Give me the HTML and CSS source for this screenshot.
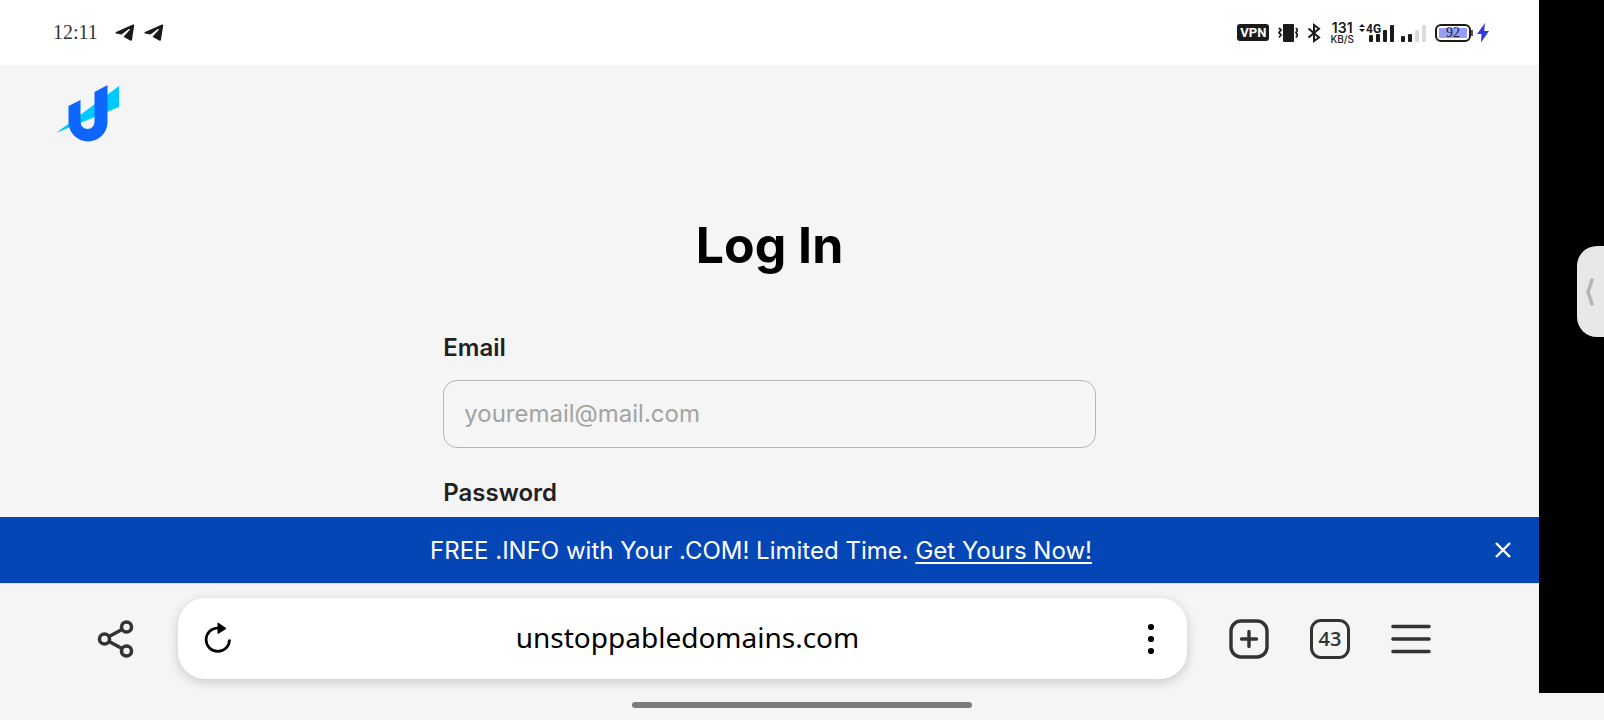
FILE: index.html
```html
<!DOCTYPE html>
<html lang="en">
<head>
  <meta charset="UTF-8">
  <meta name="viewport" content="width=device-width, initial-scale=1.0">
  <title>Log In</title>
  <link rel="stylesheet" href="styles.css">
</head>
<body>
  <div class="device">
    <div class="screen">
      <!-- Status bar -->
      <header class="status-bar">
        <div class="status-left">
          <span class="clock">12:11</span>
          <svg width="20" height="18" viewBox="0 0 20 18" fill="#1a1a1a"><path d="M1 8 18 .5q1.500-.4 1.200 1L17 15.800q-.4 1.600-1.800.8L8.500 12.800l6.300-7c.6-.8-.2-1.200-.9-.7L6.500 10.500 1 9.400Q-.3 8.800 1 8z"/></svg>
          <svg width="20" height="18" viewBox="0 0 20 18" fill="#1a1a1a"><path d="M1 8 18 .5q1.500-.4 1.200 1L17 15.800q-.4 1.600-1.800.8L8.500 12.800l6.300-7c.6-.8-.2-1.200-.9-.7L6.500 10.500 1 9.400Q-.3 8.800 1 8z"/></svg>
        </div>
        <div class="status-right">
          <span class="vpn">VPN</span>
          <svg width="20" height="20" viewBox="0 0 20 20">
            <rect x="5" y="1" width="11" height="18" rx="1" fill="#1a1a1a"/>
            <path d="M1 5l2 2-2 2.500L3 12l-2 2.500M18 5l1.500 2L18 9.500l1.500 2.500L18 14.500" fill="none" stroke="#1a1a1a" stroke-width="1.800"/>
          </svg>
          <svg width="14" height="20" viewBox="0 0 14 20" fill="none" stroke="#1a1a1a" stroke-width="2"><path d="m1.500 5.500 10.500 9L7 18V2l5 3.800-10.500 8.700"/></svg>
          <span class="speed"><b>131</b><small>KB/S</small></span>
          <svg class="signal" width="36" height="20" viewBox="0 0 36 20" fill="#1a1a1a">
            <path d="m0 4 3-3 3 3zM0 6h6L3 9z"/>
            <text x="7" y="10">4G</text>
            <rect x="10" y="12" width="4" height="7" rx="1"/><rect x="17" y="11" width="4" height="8" rx="1"/><rect x="24" y="7" width="4" height="12" rx="1"/><rect x="31" y="2" width="4" height="17" rx="1"/>
          </svg>
          <svg width="25" height="20" viewBox="0 0 25 20" fill="#1a1a1a">
            <rect x="0" y="13" width="4" height="6" rx="1"/><rect x="7" y="11" width="4" height="8" rx="1"/>
            <g fill="#dcdcdc"><rect x="14" y="7" width="4" height="12" rx="1"/><rect x="21" y="2" width="4" height="17" rx="1"/></g>
          </svg>
          <span class="power">
            <span class="battery"><span>92</span></span>
            <i class="nub"></i>
            <svg width="12" height="20" viewBox="0 0 12 20" fill="#2f3be0"><path d="M8 0 0 11h4.500L4 19.500 12 8H7.200z"/></svg>
          </span>
        </div>
      </header>

      <!-- Page -->
      <main class="page">
        <a class="logo" href="#" aria-label="Home">
          <svg width="64" height="58" viewBox="0 0 64 58">
            <path d="M63 2v21L0 49z" fill="#00c9ff"/>
            <path d="M12.500 22 24.500 16v22a7 7 0 0 0 14 0V8L51.500 1v37a19.500 19.500 0 0 1-39 0z" fill="#0d67fe"/>
          </svg>
        </a>
        <form class="login">
          <h1>Log In</h1>
          <label for="email">Email</label>
          <input id="email" type="email" placeholder="youremail@mail.com">
          <label for="password">Password</label>
          <input id="password" type="password">
        </form>
      </main>

      <!-- Promo -->
      <aside class="promo">
        <p>FREE .INFO with Your .COM! Limited Time. <a href="#">Get Yours Now!</a></p>
        <button type="button" aria-label="Close">
          <svg width="16" height="16" viewBox="0 0 16 16" stroke="#fff" stroke-width="2.400"><path d="m1 1 14 14M15 1 1 15"/></svg>
        </button>
      </aside>

      <!-- Browser toolbar -->
      <nav class="toolbar">
        <button type="button" aria-label="Share">
          <svg width="40" height="40" viewBox="0 0 40 40" fill="none" stroke="#333" stroke-width="3.600"><circle cx="8.500" cy="20" r="5"/><circle cx="30.500" cy="8" r="5"/><circle cx="30.500" cy="32" r="5"/><path d="m13 17.500 13-7M13 22.500l13 7"/></svg>
        </button>
        <div class="address">
          <button type="button" aria-label="Reload">
            <svg width="40" height="40" viewBox="0 0 40 40" fill="none" stroke="#000" stroke-width="2.700"><path d="M31.500 20.500A11.700 11.700 0 1 1 20 9h1"/><path d="m20 4 8 5.500-8 5z" fill="#000" stroke-width="1"/></svg>
          </button>
          <a class="url" href="#">unstoppabledomains.com</a>
          <button type="button" aria-label="Page options">
            <svg width="40" height="40" viewBox="0 0 40 40"><circle cx="20" cy="8" r="3.100"/><circle cx="20" cy="20" r="3.100"/><circle cx="20" cy="32" r="3.100"/></svg>
          </button>
        </div>
        <button type="button" aria-label="New tab">
          <svg width="40" height="40" viewBox="0 0 40 40" fill="none" stroke="#333" stroke-width="3.400" stroke-linecap="round"><rect x="2" y="2" width="36" height="36" rx="10"/><path d="M20 12.500v15M12.500 20h15"/></svg>
        </button>
        <button type="button" class="tabs" aria-label="Tabs">43</button>
        <button type="button" aria-label="Menu">
          <svg width="40" height="40" viewBox="0 0 40 40" stroke="#333" stroke-width="3.600" stroke-linecap="round"><path d="M2 7.500h36M2 20h36M2 32.500h36"/></svg>
        </button>
      </nav>
    </div>

    <div class="edge">
      <button type="button" aria-label="Open side panel">
        <svg width="8" height="28" viewBox="0 0 8 28" fill="none" stroke="#b4b4b4" stroke-width="3.400" stroke-linecap="round" stroke-linejoin="round"><path d="M6 2 2 14l4 12"/></svg>
      </button>
    </div>
  </div>
  <footer class="home-bar"><span></span></footer>
</body>
</html>
```

FILE: styles.css
```css
* {
  box-sizing: border-box;
}

body {
  margin: 0;
  height: 100vh;
  display: flex;
  flex-direction: column;
  overflow: hidden;
  background: #f5f5f5;
  font-family: Inter, sans-serif;
}

button {
  display: flex;
  padding: 0;
  border: none;
  background: none;
  cursor: pointer;
}

.device {
  flex: 1;
  min-height: 0;
  display: flex;
}

.screen {
  flex: 1;
  min-width: 0;
  display: flex;
  flex-direction: column;
}

/* Status bar */
.status-bar {
  display: flex;
  justify-content: space-between;
  align-items: center;
  height: 65px;
  padding: 0 50px 0 53px;
  background: #fff;
  color: #1a1a1a;
}

.status-left,
.status-right {
  display: flex;
  align-items: center;
  gap: 9px;
}

.clock {
  margin-right: 8px;
  color: #333;
  font-family: "Liberation Serif", serif;
  font-size: 20px;
}

.vpn {
  padding: 0 3px;
  border-radius: 3px;
  background: #1a1a1a;
  color: #fff;
  font-family: Roboto, sans-serif;
  font-size: 13px;
  font-weight: 700;
  line-height: 17px;
}

.speed {
  display: flex;
  flex-direction: column;
  align-items: center;
}

.speed b {
  font-size: 14px;
  font-weight: 600;
  line-height: 13px;
}

.speed small {
  font-size: 10px;
  font-weight: 500;
  line-height: 10px;
}

.signal {
  margin: 0 -3px 0 -4px;
}

.signal text {
  font-family: Roboto, sans-serif;
  font-size: 12px;
  font-weight: 700;
}

.power {
  display: flex;
  align-items: center;
}

.battery {
  padding: 2px;
  border: 2px solid #1a1a1a;
  border-radius: 6px;
}

.battery span {
  display: block;
  width: 28px;
  background: #969dfa;
  font-family: "Liberation Serif", serif;
  font-size: 14px;
  line-height: 10px;
  text-align: center;
}

.nub {
  width: 2px;
  height: 6px;
  margin-right: 4px;
  background: #555;
}

/* Page */
.page {
  flex: 1;
  min-height: 0;
  overflow: hidden;
}

.logo {
  display: block;
  padding: 19px 56px 0;
}

.logo svg {
  display: block;
}

.login {
  display: flex;
  flex-direction: column;
  width: 42.4%;
  margin: 0 auto;
}

.login h1 {
  margin: 71px 0 55px;
  font-size: 50px;
  font-weight: 700;
  line-height: 64px;
  text-align: center;
}

.login label {
  margin-bottom: 16px;
  color: #212121;
  font-size: 24px;
  font-weight: 600;
  line-height: 32px;
}

.login input {
  height: 68px;
  margin-bottom: 29px;
  padding: 0 20px 2px;
  border: 1px solid #b5b5b5;
  border-radius: 14px;
  background: transparent;
  font-family: inherit;
  font-size: 24px;
}

.login input::placeholder {
  color: #a3a3a3;
}

/* Promo */
.promo {
  display: flex;
  align-items: center;
  height: 67px;
  padding: 0 28px 0 27px;
  border-bottom: 1px solid #d3e3fa;
  background: #0546b7;
  color: #fff;
  font-size: 24px;
}

.promo p {
  flex: 1;
  margin: 0;
  text-align: center;
}

.promo a {
  color: inherit;
  text-decoration-thickness: 2px;
  text-underline-offset: 3px;
}

/* Browser toolbar */
.toolbar {
  display: flex;
  align-items: center;
  gap: 41px;
  height: 109px;
  padding: 0 108px 0 96px;
}

.address {
  flex: 1;
  display: flex;
  align-items: center;
  height: 81px;
  margin: 0 1px;
  padding: 0 16px 0 20px;
  border-radius: 27px;
  background: #fff;
  box-shadow: 0 3px 12px rgba(0, 0, 0, 0.18);
}

.url {
  flex: 1;
  padding: 0 0 4px 6px;
  color: #000;
  font-family: "Noto Sans", sans-serif;
  font-size: 28px;
  text-align: center;
  text-decoration: none;
}

.tabs {
  align-items: center;
  justify-content: center;
  width: 40px;
  height: 40px;
  border: 3px solid #333;
  border-radius: 11px;
  color: #333;
  font-family: "Open Sans", sans-serif;
  font-size: 20px;
  font-weight: 600;
}

/* Side handle */
.edge {
  display: flex;
  justify-content: flex-end;
  width: 65px;
  padding-top: 246px;
  background: #000;
}

.edge button {
  align-items: center;
  width: 27px;
  height: 91px;
  padding-left: 9px;
  border-radius: 20px 0 0 20px;
  background: #e8e8e8;
}

.home-bar {
  display: flex;
  justify-content: center;
  height: 27px;
  padding-top: 9px;
}

.home-bar span {
  width: 340px;
  height: 6px;
  border-radius: 3px;
  background: #7b7b7b;
}
```
